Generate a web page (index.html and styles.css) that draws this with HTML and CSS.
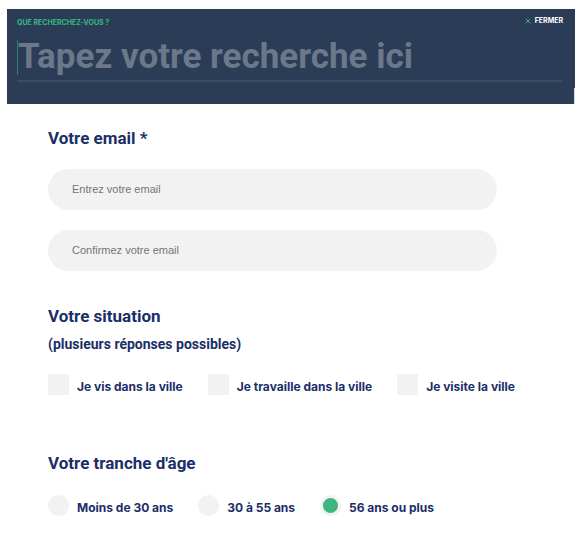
FILE: index.html
```html
<!DOCTYPE html>
<html lang="fr">
<head>
<meta charset="utf-8">
<meta name="viewport" content="width=device-width, initial-scale=1">
<title>Votre profil</title>
<link rel="stylesheet" href="styles.css">
</head>
<body>
<header class="search">
  <div class="search-top">
    <label class="search-label" for="search">Que recherchez-vous ?</label>
    <button class="search-close" type="button">
      <svg class="close-icon" viewBox="0 0 6 6" aria-hidden="true"><path d="M.7.7 5.3 5.3M5.3.7.7 5.3"/></svg>
      Fermer
    </button>
  </div>
  <div class="search-field">
    <input class="search-input" id="search" type="text" placeholder="Tapez votre recherche ici">
  </div>
</header>
<main>
  <form class="form">
    <section class="group">
      <h2 class="title"><label for="email">Votre email *</label></h2>
      <div class="fields">
        <input class="field" id="email" type="email" placeholder="Entrez votre email">
        <input class="field" type="email" placeholder="Confirmez votre email" aria-label="Confirmez votre email">
      </div>
    </section>
    <section class="group">
      <h2 class="title">Votre situation</h2>
      <p class="hint">(plusieurs réponses possibles)</p>
      <div class="options">
        <label class="option"><input class="box" type="checkbox">Je vis dans la ville</label>
        <label class="option"><input class="box" type="checkbox">Je travaille dans la ville</label>
        <label class="option"><input class="box" type="checkbox">Je visite la ville</label>
      </div>
    </section>
    <section class="group">
      <h2 class="title">Votre tranche d'âge</h2>
      <div class="options">
        <label class="option"><input class="box round" type="radio" name="age">Moins de 30 ans</label>
        <label class="option"><input class="box round" type="radio" name="age">30 à 55 ans</label>
        <label class="option"><input class="box round" type="radio" name="age" checked>56 ans ou plus</label>
      </div>
    </section>
  </form>
</main>
</body>
</html>
```
FILE: styles.css
```css
* { box-sizing: border-box; }

body {
  margin: 0;
  background: #fff;
  color: #1a2e68;
  font-family: Inter, sans-serif;
}

.search {
  position: relative;
  height: 95px;
  margin: 9px 6px 0 7px;
  padding: 7px 12px 0 10px;
  background: #2b3d56;
}

.search::after {
  content: "";
  position: absolute;
  right: 0;
  bottom: 0;
  width: 1px;
  height: 16px;
  background: #d8dbe0;
}

.search-top {
  display: flex;
  justify-content: space-between;
  height: 12px;
}

.search-label {
  color: #35b881;
  font-size: 7px;
  font-weight: 700;
  line-height: 14px;
  text-transform: uppercase;
}

.search-close {
  display: flex;
  align-items: center;
  gap: 4px;
  height: 10px;
  padding: 0;
  border: 0;
  background: none;
  color: #fff;
  font: 700 7px/10px Inter, sans-serif;
  text-transform: uppercase;
}

.close-icon {
  width: 6px;
  height: 6px;
  fill: none;
  stroke: #35b881;
}

.search-field {
  margin-top: 12px;
  padding-bottom: 5px;
  border-bottom: 2px solid #3a4b63;
}

.search-input {
  display: block;
  width: 100%;
  height: 35px;
  padding: 0 0 3px;
  border: 0;
  border-left: 1px solid #2f826f;
  background: none;
  color: #fff;
  font: 700 35px/32px Roboto, sans-serif;
}

.search-input::placeholder {
  color: #6b788a;
  opacity: 1;
}

.form {
  display: flex;
  flex-direction: column;
  padding: 22px 48px 12px;
}

.group + .group {
  margin-top: 33px;
}

.group + .group:last-child {
  margin-top: 52px;
}

.title {
  margin: 0;
  font: 700 17px/24px Roboto, sans-serif;
}

.fields {
  display: grid;
  gap: 20px;
  margin: 19px 36px 0 0;
}

.field {
  width: 100%;
  height: 41px;
  padding: 0 24px 2px;
  border: 0;
  border-radius: 21px;
  background: #f2f2f2;
  color: #333;
  font: 11px "Liberation Sans", sans-serif;
}

.field::placeholder {
  color: #757575;
  opacity: 1;
}

.hint {
  margin: 6px 0 0;
  font: 700 14px/20px Roboto, sans-serif;
}

.options {
  display: flex;
  flex-wrap: wrap;
  gap: 8px 25px;
  margin-top: 20px;
}

.option {
  display: flex;
  align-items: flex-start;
  gap: 8px;
  font-size: 12px;
  font-weight: 700;
  line-height: 25px;
  white-space: nowrap;
}

.box {
  appearance: none;
  flex: none;
  width: 21px;
  height: 21px;
  margin: 0;
  background: #f2f2f2;
}

.box:checked {
  border: 3px solid #f2f2f2;
  background: #3db680;
}

.round {
  border-radius: 50%;
}
```
